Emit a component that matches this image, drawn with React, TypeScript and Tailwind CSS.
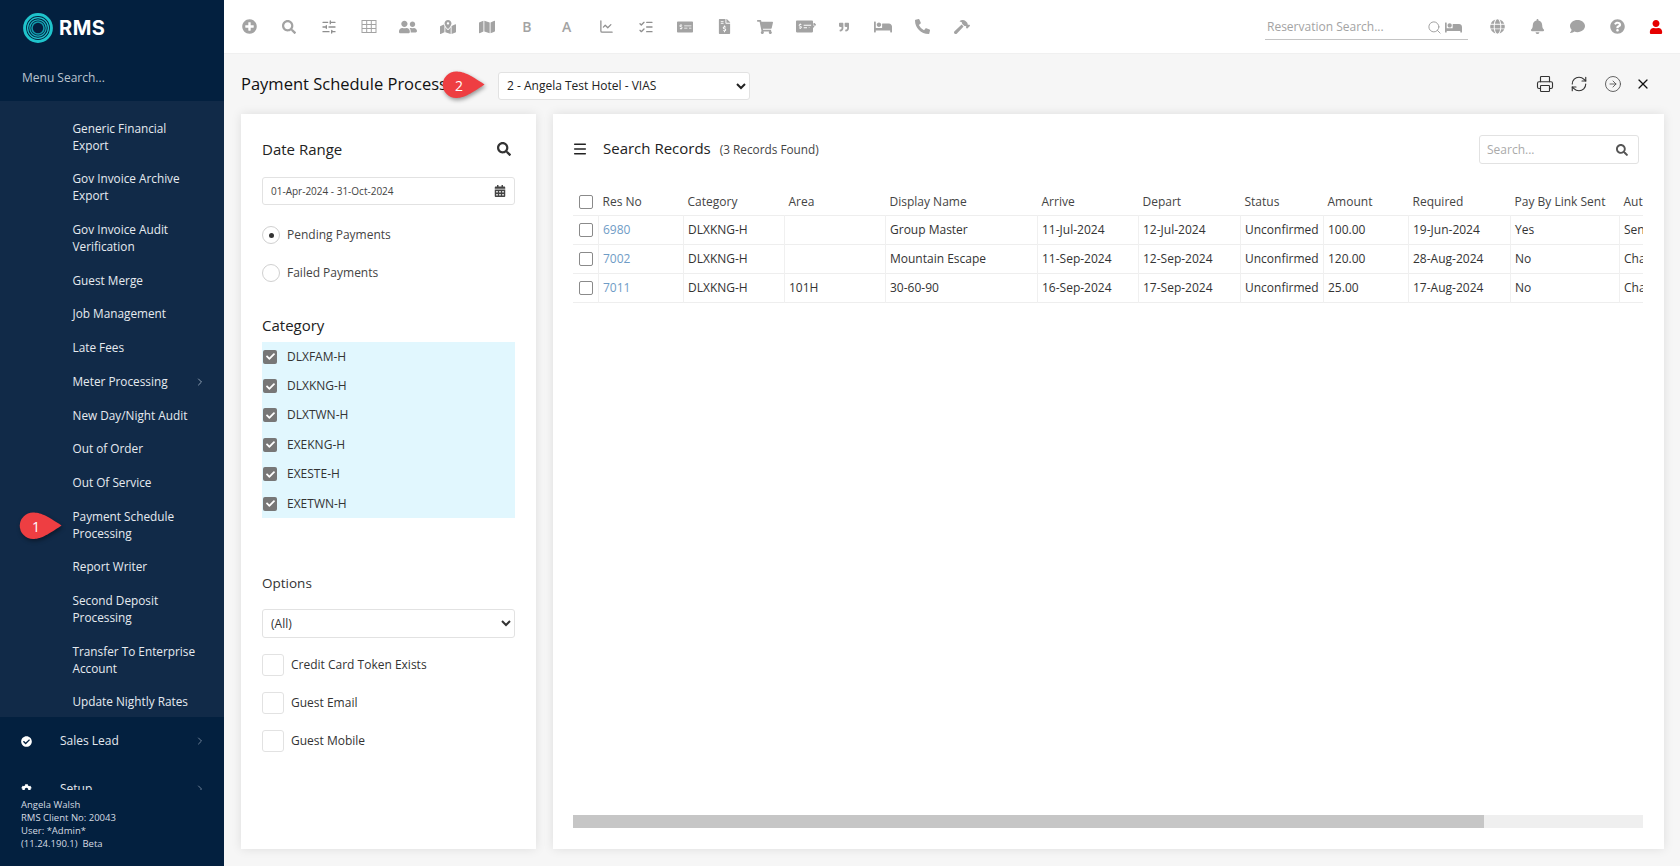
import React from "react";
import {
  FaPlusCircle, FaSearch, FaUserFriends, FaMapMarkedAlt, FaMap, FaMoneyCheckAlt, FaFileInvoiceDollar,
  FaShoppingCart, FaQuoteRight, FaBed, FaPhoneAlt, FaHammer, FaGlobe, FaBell, FaComment, FaQuestionCircle,
  FaUser, FaCheckCircle, FaCog, FaCheck, FaCalendarAlt, FaPen,
} from "react-icons/fa";
import { SlidersHorizontal, ChartLine, ListChecks, Search, Printer, RefreshCw, CircleArrowRight, X, ChevronRight, Menu } from "lucide-react";

const font = { fontFamily: '"Open Sans", "Noto Sans", sans-serif' };

const menu: { t: string[]; arrow?: boolean }[] = [
  { t: ["Generic Financial", "Export"] },
  { t: ["Gov Invoice Archive", "Export"] },
  { t: ["Gov Invoice Audit", "Verification"] },
  { t: ["Guest Merge"] },
  { t: ["Job Management"] },
  { t: ["Late Fees"] },
  { t: ["Meter Processing"], arrow: true },
  { t: ["New Day/Night Audit"] },
  { t: ["Out of Order"] },
  { t: ["Out Of Service"] },
  { t: ["Payment Schedule", "Processing"] },
  { t: ["Report Writer"] },
  { t: ["Second Deposit", "Processing"] },
  { t: ["Transfer To Enterprise", "Account"] },
  { t: ["Update Nightly Rates"] },
];

function Callout({ n, className }: { n: string; className: string }) {
  return (
    <div className={"absolute w-[44px] h-[30px] " + className}>
      <svg width="44" height="30" viewBox="0 0 44 30" className="absolute inset-0 drop-shadow-[1px_2px_2px_rgba(0,0,0,0.4)]">
        <path d="M14 1.5C21 1.5 27 4 42.5 14.5 C27 25 21 28 14 28 A13.2 13.2 0 0 1 14 1.5Z" fill="#ee3e42" />
      </svg>
      <span className="absolute left-0 top-0 w-[34px] h-[30px] flex items-center justify-center text-white text-[14px]">{n}</span>
    </div>
  );
}

function TableIcon() {
  return (
    <svg width="16" height="15" viewBox="0 0 16 15" fill="none" stroke="#a3a3a3" strokeWidth="1">
      <rect x="1" y="1.5" width="14" height="12" />
      <path d="M1 5.5h14M1 9.5h14M5.7 1.5v12M10.3 1.5v12" />
    </svg>
  );
}

function CheckEdit() {
  return (
    <span className="relative inline-flex">
      <FaMoneyCheckAlt size={17} />
      <FaPen size={8} className="absolute -right-[3px] top-[5px] text-[#a3a3a3] stroke-white" />
    </span>
  );
}

const tools: React.ReactNode[] = [
  <FaPlusCircle size={15} />,
  <FaSearch size={14} />,
  <SlidersHorizontal size={16} strokeWidth={2} className="text-[#8f8f8f]" />,
  <TableIcon />,
  <FaUserFriends size={18} />,
  <FaMapMarkedAlt size={16} />,
  <FaMap size={16} />,
  <span className="text-[14px] font-semibold">B</span>,
  <span className="text-[14px] font-semibold">A</span>,
  <ChartLine size={15} strokeWidth={2} className="text-[#8f8f8f]" />,
  <ListChecks size={16} strokeWidth={2} className="text-[#8f8f8f]" />,
  <FaMoneyCheckAlt size={16} />,
  <FaFileInvoiceDollar size={15} />,
  <FaShoppingCart size={16} />,
  <CheckEdit />,
  <FaQuoteRight size={10} />,
  <FaBed size={18} />,
  <FaPhoneAlt size={15} />,
  <FaHammer size={16} />,
];

const cols = [
  { h: "Res No", w: "w-[85px]" },
  { h: "Category", w: "w-[101px]" },
  { h: "Area", w: "w-[101px]" },
  { h: "Display Name", w: "w-[152px]" },
  { h: "Arrive", w: "w-[101px]" },
  { h: "Depart", w: "w-[102px]" },
  { h: "Status", w: "w-[83px]" },
  { h: "Amount", w: "w-[85px]" },
  { h: "Required", w: "w-[102px]" },
  { h: "Pay By Link Sent", w: "w-[109px]" },
  { h: "Auto Payment", w: "w-[150px]" },
];

const rows = [
  ["6980", "DLXKNG-H", "", "Group Master", "11-Jul-2024", "12-Jul-2024", "Unconfirmed", "100.00", "19-Jun-2024", "Yes", "Send Link"],
  ["7002", "DLXKNG-H", "", "Mountain Escape", "11-Sep-2024", "12-Sep-2024", "Unconfirmed", "120.00", "28-Aug-2024", "No", "Charge Card"],
  ["7011", "DLXKNG-H", "101H", "30-60-90", "16-Sep-2024", "17-Sep-2024", "Unconfirmed", "25.00", "17-Aug-2024", "No", "Charge Card"],
];

const Box = () => <div className="w-[14px] h-[14px] rounded-[2px] border border-[#8a8a8a] bg-white" />;

function Opt({ label }: { label: string }) {
  return (
    <div className="flex items-center h-[22px] gap-[7px]">
      <div className="w-[22px] h-[22px] rounded-[3px] border border-[#e2e2e2] bg-white" />
      <span className="text-[12px] text-[#333]">{label}</span>
    </div>
  );
}

function Radio({ label, on }: { label: string; on?: boolean }) {
  return (
    <div className="flex items-center h-[20px] gap-[7px]">
      <div className="w-[18px] h-[18px] rounded-full border border-[#d0d0d0] bg-white flex items-center justify-center">
        {on && <div className="w-[5px] h-[5px] rounded-full bg-[#333]" />}
      </div>
      <span className="text-[12px] text-[#444]">{label}</span>
    </div>
  );
}

export default function App() {
  return (
    <div style={font} className="relative flex w-[1680px] h-[866px] overflow-hidden bg-[#f6f6f6]">
      <aside className="w-[224px] h-full shrink-0 flex flex-col bg-[#03203f] text-white">
        <div className="h-[58px] shrink-0 flex items-start pl-[23px] pt-[13px] gap-[6px]">
          <svg width="30" height="30" viewBox="0 0 30 30" fill="none" stroke="#1fc4cc">
            <circle cx="15" cy="15" r="13.4" strokeWidth="3" />
            <circle cx="15" cy="15" r="10.4" strokeWidth="1.2" />
            <circle cx="15" cy="15" r="8.2" strokeWidth="1.2" stroke="#19aebb" />
            <circle cx="15" cy="15" r="6" strokeWidth="1.6" stroke="#109aaa" />
          </svg>
          <span className="text-[20px] font-bold leading-[30px] tracking-[0.5px]" style={{ fontFamily: '"Inter", sans-serif' }}>RMS</span>
        </div>
        <div className="h-[43px] shrink-0 pl-[22px] pt-[9px] text-[12px] leading-[22px] text-[#b9c3cf]">Menu Search...</div>
        <div className="h-[616px] shrink-0 overflow-hidden bg-[#112a48] pt-[10.4px]">
          {menu.map((m) => (
            <div key={m.t[0]} className="relative pl-[72.5px] py-[8.35px] text-[11.8px] leading-[17px] text-[#e6ebf0]">
              {m.t.map((l) => (
                <div key={l}>{l}</div>
              ))}
              {m.arrow && <ChevronRight size={12} className="absolute right-[18px] top-[11px] text-[#8fa0b3]" />}
            </div>
          ))}
        </div>
        <div className="h-[73px] shrink-0 overflow-hidden">
          <div className="flex items-center h-[48px] pl-[21px]">
            <FaCheckCircle size={11} className="text-white" />
            <span className="ml-[28px] text-[12px] text-[#e3e8ee]">Sales Lead</span>
            <ChevronRight size={12} className="ml-auto mr-[18px] text-[#6d8096]" />
          </div>
          <div className="flex items-center h-[48px] pl-[21px]">
            <FaCog size={11} className="text-white" />
            <span className="ml-[28px] text-[12px] text-[#e3e8ee]">Setup</span>
            <ChevronRight size={12} className="ml-auto mr-[18px] text-[#6d8096]" />
          </div>
        </div>
        <div className="pl-[21px] pt-[8px] text-[9.5px] leading-[13px] text-[#d5dbe2]">
          <div>Angela Walsh</div>
          <div>RMS Client No: 20043</div>
          <div>User: *Admin*</div>
          <div>(11.24.190.1)&nbsp; Beta</div>
        </div>
      </aside>

      <main className="flex-1 flex flex-col min-w-0">
        <header className="h-[54px] shrink-0 bg-white flex items-center pl-[6px] pr-[5px] border-b border-[#f0f0f0]">
          {tools.map((t, i) => (
            <div key={i} className="w-[39.6px] flex items-center justify-center text-[#a3a3a3]">{t}</div>
          ))}
          <div className="ml-auto mr-[9px] w-[203px] h-[27px] flex items-center border-b border-[#c4c4c4] text-[#a3a3a3]">
            <span className="text-[12px] pl-[2px] mt-[2px]">Reservation Search...</span>
            <Search size={15} strokeWidth={1.6} className="ml-auto mt-[2px]" />
            <FaBed size={17} className="ml-[3px] mr-[6px] mt-[2px]" />
          </div>
          <div className="flex items-center text-[#a3a3a3]">
            <div className="w-[40px] flex justify-center"><FaGlobe size={15} /></div>
            <div className="w-[40px] flex justify-center"><FaBell size={15} /></div>
            <div className="w-[40px] flex justify-center"><FaComment size={15} /></div>
            <div className="w-[40px] flex justify-center"><FaQuestionCircle size={15} /></div>
            <div className="w-[38px] flex justify-center text-[#e60000]"><FaUser size={14} /></div>
          </div>
        </header>

        <div className="h-[60px] shrink-0 flex items-center pl-[17px] pr-[29px]">
          <h1 className="w-[257px] shrink-0 text-[16.5px] font-medium text-[#111] whitespace-nowrap">Payment Schedule Processing</h1>
          <select className="w-[252px] h-[28px] mt-[3px] bg-white border border-[#e2e2e2] rounded-[3px] text-[12px] text-[#222] pl-[4px]">
            <option>2 - Angela Test Hotel - VIAS</option>
          </select>
          <div className="ml-auto flex items-center text-[#333]">
            <Printer size={18} strokeWidth={1.5} />
            <RefreshCw size={18} strokeWidth={1.5} className="ml-[16px]" />
            <CircleArrowRight size={18} strokeWidth={1.2} className="ml-[16px] text-[#555]" />
            <X size={16} strokeWidth={1.8} className="ml-[13px] text-[#111]" />
          </div>
        </div>

        <div className="h-[735px] shrink-0 flex gap-[17px] pl-[17px] pr-[16px]">
          <section className="w-[295px] shrink-0 bg-white shadow-[0_0_10px_rgba(0,0,0,0.1)] pl-[21px] pr-[21px] pt-[24px]">
            <div className="flex items-center justify-between h-[22px] pr-[4px]">
              <span className="text-[15px] font-medium text-[#222]">Date Range</span>
              <FaSearch size={14} className="text-[#333]" />
            </div>
            <div className="mt-[17px] h-[28px] border border-[#e2e2e2] rounded-[3px] flex items-center px-[8px] text-[10px] text-[#444]">
              01-Apr-2024 - 31-Oct-2024
              <FaCalendarAlt size={12} className="ml-auto text-[#444]" />
            </div>
            <div className="mt-[20px] flex flex-col gap-[18px]">
              <Radio label="Pending Payments" on />
              <Radio label="Failed Payments" />
            </div>
            <div className="mt-[31px] text-[15px] font-medium text-[#222] leading-[22px]">Category</div>
            <div className="mt-[6px] h-[176px] bg-[#e1f7fe]">
              {["DLXFAM-H", "DLXKNG-H", "DLXTWN-H", "EXEKNG-H", "EXESTE-H", "EXETWN-H"].map((c) => (
                <div key={c} className="h-[29.4px] flex items-center pl-[1px] gap-[10px]">
                  <div className="w-[14px] h-[14px] rounded-[2px] bg-[#777] flex items-center justify-center">
                    <FaCheck size={9} className="text-white" />
                  </div>
                  <span className="text-[12px] text-[#333]">{c}</span>
                </div>
              ))}
            </div>
            <div className="mt-[54px] text-[13.5px] font-medium text-[#333] leading-[22px]">Options</div>
            <select className="mt-[15px] w-full h-[29px] bg-white border border-[#e2e2e2] rounded-[3px] text-[12px] text-[#333] pl-[4px]">
              <option>(All)</option>
            </select>
            <div className="mt-[16px] flex flex-col gap-[16px]">
              <Opt label="Credit Card Token Exists" />
              <Opt label="Guest Email" />
              <Opt label="Guest Mobile" />
            </div>
          </section>

          <section className="flex-1 min-w-0 bg-white shadow-[0_0_10px_rgba(0,0,0,0.1)] pt-[21px] pb-[21px] pl-[20px] pr-[21px] flex flex-col">
            <div className="flex items-start h-[29px]">
              <Menu size={16} strokeWidth={2.2} className="mt-[6px] text-[#222] -ml-[1px]" />
              <span className="ml-[15px] mt-[1px] text-[15px] font-medium text-[#222] leading-[24px]">Search Records</span>
              <span className="ml-[9px] mt-[3px] text-[11.8px] text-[#444] leading-[22px]">(3 Records Found)</span>
              <div className="ml-auto mr-[4px] w-[160px] h-[29px] border border-[#e2e2e2] rounded-[3px] flex items-center px-[7px] text-[12px] text-[#aaa]">
                Search...
                <FaSearch size={12} className="ml-auto text-[#555] mr-[3px]" />
              </div>
            </div>
            <div className="mt-[24px] overflow-hidden">
              <table className="table-fixed border-collapse w-[1096px] text-[12px] text-[#333]">
                <thead>
                  <tr className="h-[27px] border-b border-[#eee]">
                    <th className="w-[25px] p-0 pl-[6px] pt-[2px] font-normal text-left"><Box /></th>
                    {cols.map((c) => (
                      <th key={c.h} className={c.w + " font-normal text-left pl-[4.5px] pt-[2px] text-[#444] whitespace-nowrap overflow-hidden"}>{c.h}</th>
                    ))}
                  </tr>
                </thead>
                <tbody>
                  {rows.map((r) => (
                    <tr key={r[0]} className="h-[29.3px] border-b border-[#eee]">
                      <td className="p-0 pl-[6px]"><Box /></td>
                      {r.map((v, i) => (
                        <td key={i} className={"pl-[4.5px] border-l border-[#f0f0f0] whitespace-nowrap overflow-hidden " + (i === 0 ? "text-[#6f9cc6]" : "")}>{v}</td>
                      ))}
                    </tr>
                  ))}
                </tbody>
              </table>
            </div>
            <div className="mt-auto h-[13px] bg-[#efefef] flex">
              <div className="w-[911px] h-full bg-[#c6c6c6]" />
            </div>
          </section>
        </div>
      </main>

      <Callout n="1" className="left-[19px] top-[511px]" />
      <Callout n="2" className="left-[442px] top-[70px]" />
    </div>
  );
}
